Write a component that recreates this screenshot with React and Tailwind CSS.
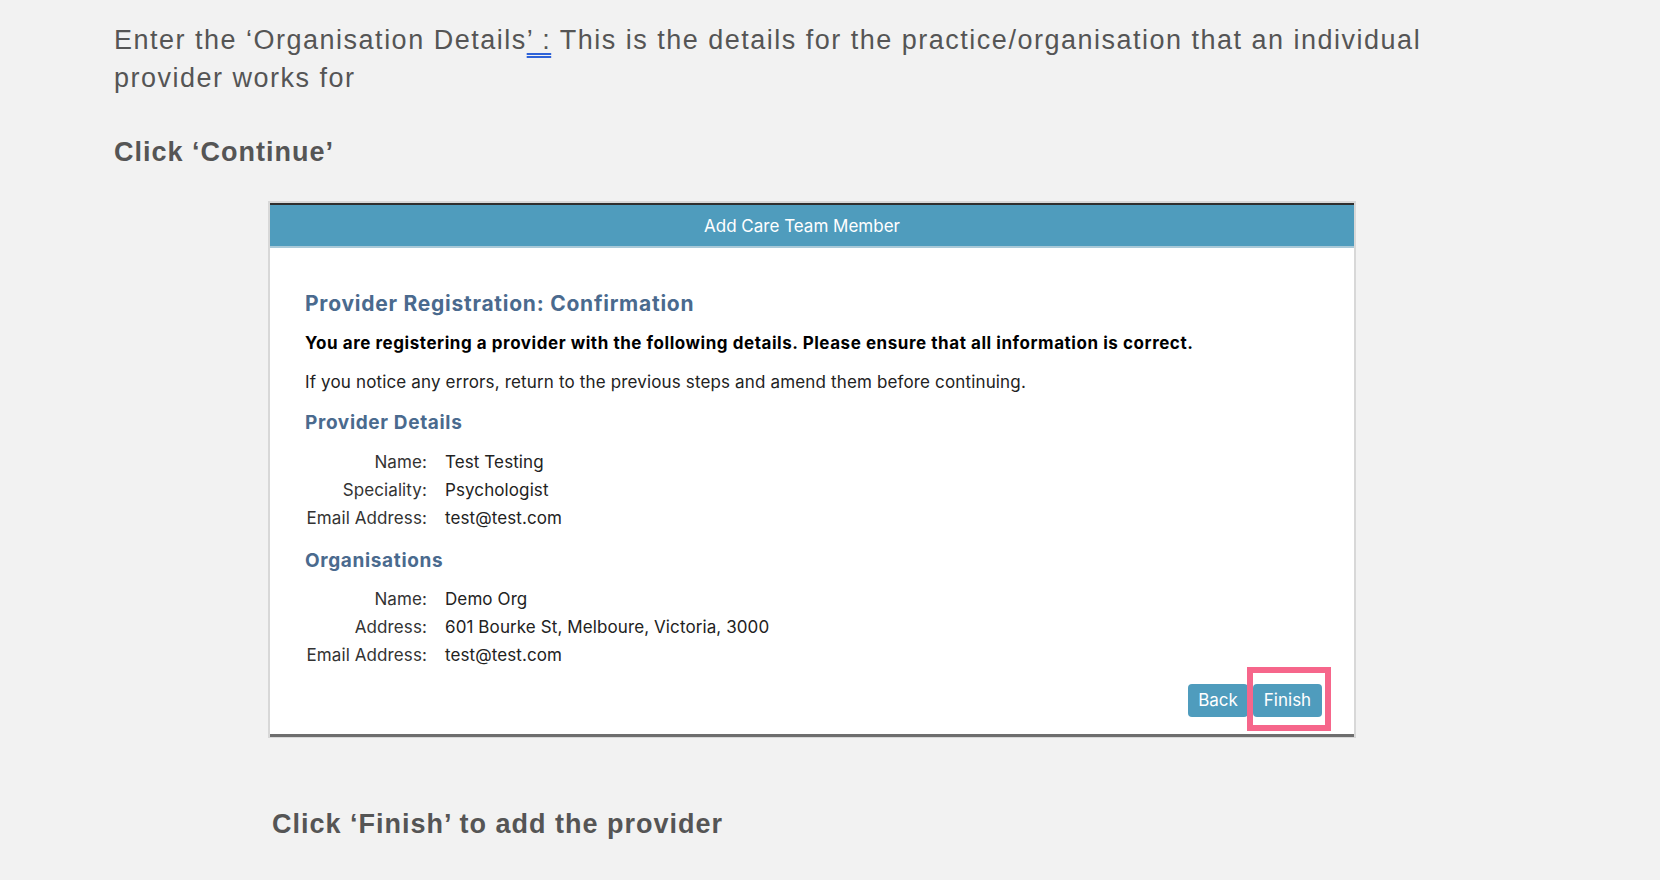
export default function App() {
  const provider = [
    ["Name:", "Test Testing"],
    ["Speciality:", "Psychologist"],
    ["Email Address:", "test@test.com"],
  ];
  const org = [
    ["Name:", "Demo Org"],
    ["Address:", "601 Bourke St, Melboure, Victoria, 3000"],
    ["Email Address:", "test@test.com"],
  ];
  const Rows = ({ rows, className }) => (
    <div className={className}>
      {rows.map(([k, v], i) => (
        <div key={i} className="flex h-[28px] items-center text-[17px] tracking-[0.1px] text-[#222]">
          <div className="w-[122px] whitespace-nowrap text-right text-[#333]">{k}</div>
          <div className="ml-[18px]">{v}</div>
        </div>
      ))}
    </div>
  );
  return (
    <div className="min-h-[880px] w-full bg-[#f2f2f2] text-[#555555] [font-family:'Liberation_Sans',Arial,sans-serif]">
      <div className="pl-[114px] pt-[21px]">
        <p className="w-[1340px] text-[27px] leading-[38px] tracking-[1.5px]">
          Enter the ‘Organisation Details
          <span className="underline decoration-double decoration-[color:#2f63d8] decoration-2 underline-offset-[4px]">’ :</span>{" "}
          This is the details for the practice/organisation that an individual provider works for
        </p>
        <p className="mt-[36px] text-[27px] font-bold leading-[38px] tracking-[1px]">Click ‘Continue’</p>
      </div>

      <div className="ml-[268px] mt-[30px] w-[1088px] border-x-2 border-t-2 border-b border-[#d8d8d8] bg-white [font-family:Inter,'Noto_Sans',sans-serif]">
        <div className="border-t-2 border-[#2e2e2e]">
          <div className="flex h-[41px] items-center justify-center bg-[#4f9cbd] pt-[3px] pr-[20px] text-[17px] text-white">
            Add Care Team Member
          </div>
          <div className="h-[2px] bg-[#a9c9d8]"></div>
        </div>
        <div className="border-b-[3px] border-[#6e6e6e] pl-[35px] pr-[32px] pb-[17px]">
          <h2 className="mt-[42px] text-[21px] font-bold leading-[28px] tracking-[0.75px] text-[#4a6a8e]">
            Provider Registration: Confirmation
          </h2>
          <p className="mt-[13px] text-[17px] font-bold leading-[24px] tracking-[0.55px] text-black">
            You are registering a provider with the following details. Please ensure that all information is correct.
          </p>
          <p className="mt-[15px] text-[17px] leading-[24px] tracking-[0.15px] text-[#222]">
            If you notice any errors, return to the previous steps and amend them before continuing.
          </p>
          <h3 className="mt-[16px] text-[19px] font-bold leading-[26px] tracking-[0.65px] text-[#4a6a8e]">Provider Details</h3>
          <Rows rows={provider} className="mt-[13px]" />
          <h3 className="mt-[15px] text-[19px] font-bold leading-[26px] tracking-[0.65px] text-[#4a6a8e]">Organisations</h3>
          <Rows rows={org} className="mt-[12px]" />
          <div className="mt-[14px] flex justify-end gap-[5px]">
            <button className="h-[33px] w-[60px] rounded-[4px] bg-[#4f9cbd] text-[17px] text-white">Back</button>
            <div className="relative">
              <button className="h-[33px] w-[69px] rounded-[4px] bg-[#4f9cbd] text-[17px] text-white">Finish</button>
              <div className="pointer-events-none absolute -left-[6px] -right-[9px] -top-[17px] -bottom-[14px] border-[6px] border-[#f6668b]"></div>
            </div>
          </div>
        </div>
      </div>

      <p className="ml-[272px] mt-[67px] text-[27px] font-bold leading-[38px] tracking-[1px]">
        Click ‘Finish’ to add the provider
      </p>
    </div>
  );
}
